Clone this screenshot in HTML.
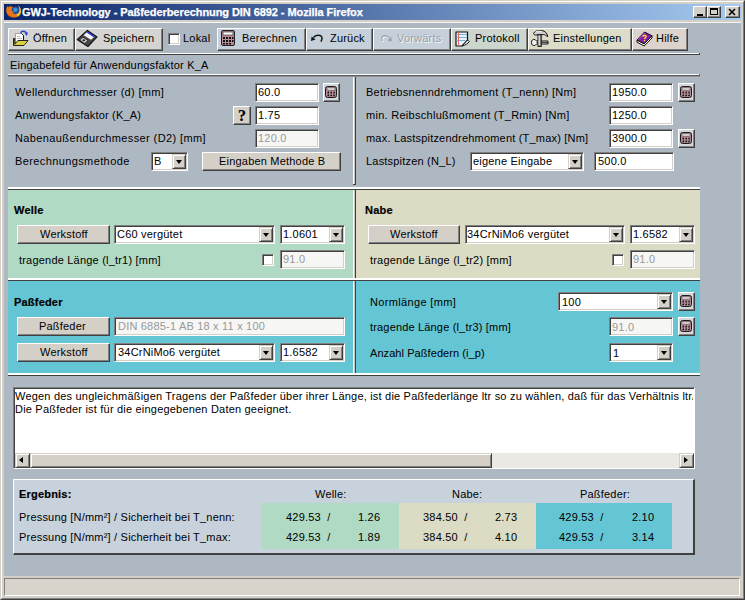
<!DOCTYPE html>
<html><head><meta charset="utf-8">
<style>
*{box-sizing:border-box;margin:0;padding:0}
html,body{width:745px;height:600px;overflow:hidden}
body{position:relative;background:#d4d0c8;font-family:"Liberation Sans",sans-serif;font-size:11px;color:#000}
.a{position:absolute}
.t{position:absolute;white-space:pre;line-height:13px;letter-spacing:0.2px}
.b{font-weight:bold;-webkit-text-stroke:0.2px currentColor}
.btn{position:absolute;background:#d4d0c8;border-top:1px solid #fff;border-left:1px solid #fff;border-right:1px solid #404040;border-bottom:1px solid #404040;box-shadow:inset -1px -1px 0 #808080}
.inp{position:absolute;background:#fff;border-top:1px solid #808080;border-left:1px solid #808080;border-right:1px solid #fff;border-bottom:1px solid #fff;box-shadow:inset 1px 1px 0 #404040,inset -1px -1px 0 #d4d0c8}
.dis{color:#999}
.sel .dd{position:absolute;right:1px;top:1px;width:14px;bottom:1px;background:#d4d0c8;border-top:1px solid #d4d0c8;border-left:1px solid #d4d0c8;border-right:1px solid #404040;border-bottom:1px solid #404040;box-shadow:inset 1px 1px 0 #fff,inset -1px -1px 0 #808080}
.dd:after{content:"";position:absolute;left:2.5px;top:5px;border-left:3.5px solid transparent;border-right:3.5px solid transparent;border-top:4px solid #000}
.cb{position:absolute;width:12px;height:12px;background:#fff;border-top:1px solid #808080;border-left:1px solid #808080;border-right:1px solid #fff;border-bottom:1px solid #fff;box-shadow:inset 1px 1px 0 #404040,inset -1px -1px 0 #d4d0c8}
.hl{position:absolute;height:1px}
.sb{position:absolute;background:#d4d0c8;border-top:1px solid #d4d0c8;border-left:1px solid #d4d0c8;border-right:1px solid #404040;border-bottom:1px solid #404040;box-shadow:inset 1px 1px 0 #fff,inset -1px -1px 0 #808080}
.calc{position:absolute;width:17px;height:19px;background:#d4d8dc;border-top:1px solid #fff;border-left:1px solid #fff;border-right:1px solid #404040;border-bottom:1px solid #404040;box-shadow:inset -1px -1px 0 #808080}
</style></head><body>

<!-- window frame -->
<div class="a" style="left:0;top:0;width:745px;height:600px;border-top:1px solid #d4d0c8;border-left:1px solid #d4d0c8;border-right:1px solid #404040;border-bottom:1px solid #404040"></div>
<div class="a" style="left:1px;top:1px;width:743px;height:598px;border-top:1px solid #fff;border-left:1px solid #fff;border-right:1px solid #808080;border-bottom:1px solid #808080"></div>
<!-- title bar -->
<div class="a" style="left:4px;top:4px;width:737px;height:16px;background:linear-gradient(to right,#0a246a,#a6caf0)"></div>
<svg class="a" style="left:5px;top:3px" width="16" height="16" viewBox="0 0 16 16">
<circle cx="10.6" cy="8" r="4.3" fill="#1f4c9c"/><circle cx="10.4" cy="6.8" r="2.2" fill="#3c90d8"/>
<path d="M2,3 L3.6,4.2 L5,2.4 L6,4 C7,3.6 7.6,3.8 8.2,4.2 C6.6,5.4 6.4,7 7.2,8.2 L9.2,9.2 L7.6,10 C9.2,11.4 12,11.6 13.6,10 C14.9,8.4 14.9,5.4 13,2.6 C15.6,4.4 16.2,7 15.8,9.6 C15.2,12.6 12.2,14.6 8.6,14.6 C4.6,14.6 1.2,11.6 1.2,7.6 C1.2,6 1.5,4.3 2,3Z" fill="#ea7412"/>
<path d="M13,2.6 C15.6,4.4 16.2,7 15.8,9.6 C15.4,11.6 14.2,13 12.6,13.8 L11.4,11.2 C12.5,11 13.1,10.6 13.6,10 C14.9,8.4 14.9,5.4 13,2.6Z" fill="#f6c82c"/>
<path d="M2.4,9.8 C3.2,12.4 5.6,14 8.4,14.2 C5.4,14.8 2.6,12.8 2.4,9.8Z" fill="#d84c08"/>
</svg>
<div class="t b" style="left:22px;top:6px;color:#fff;letter-spacing:-0.07px;-webkit-text-stroke:0.25px #fff">GWJ-Technology - Paßfederberechnung DIN 6892 - Mozilla Firefox</div>
<div class="btn" style="left:693px;top:6px;width:14px;height:12px"></div>
<div class="a" style="left:697px;top:14px;width:6px;height:2px;background:#000"></div>
<div class="btn" style="left:707px;top:6px;width:14px;height:12px"></div>
<div class="a" style="left:710px;top:8px;width:8px;height:7px;border:1px solid #000;border-top-width:2px"></div>
<div class="btn" style="left:725px;top:6px;width:15px;height:12px"></div>
<svg class="a" style="left:725px;top:6px" width="15" height="12" viewBox="0 0 15 12"><path d="M4,3 L10,9 M10,3 L4,9" stroke="#000" stroke-width="1.6"/></svg>

<!-- content bg -->
<div class="a" style="left:4px;top:22px;width:737px;height:554px;background:#aeb8c2;border-top:1px solid #f4f4f4"></div>

<!-- toolbar -->
<div class="btn" style="left:8px;top:28px;width:67px;height:23px;background:#d4d4d2"></div>
<div class="btn" style="left:75px;top:28px;width:88px;height:23px;background:#d4d4d2"></div>
<div class="cb" style="left:168px;top:33px;width:12px;height:12px"></div>
<div class="btn" style="left:217px;top:28px;width:89px;height:23px;background:#c6d0da"></div>
<div class="btn" style="left:306px;top:28px;width:67px;height:23px;background:#c6d0da"></div>
<div class="btn" style="left:373px;top:28px;width:78px;height:23px;background:#c6d0da"></div>
<div class="btn" style="left:451px;top:28px;width:77px;height:23px;background:#cdd6cc"></div>
<div class="btn" style="left:528px;top:28px;width:104px;height:23px;background:#dcdcc8"></div>
<div class="btn" style="left:632px;top:28px;width:56px;height:23px;background:#dcd4cc"></div>
<div class="t" style="left:33px;top:32px">Öffnen</div>
<div class="t" style="left:103px;top:32px">Speichern</div>
<div class="t" style="left:183px;top:32px">Lokal</div>
<div class="t" style="left:242px;top:32px">Berechnen</div>
<div class="t" style="left:330px;top:32px">Zurück</div>
<div class="t" style="left:397px;top:32px;color:#98a0a8;text-shadow:1px 1px 0 #f4f6f8">Vorwärts</div>
<div class="t" style="left:475px;top:32px">Protokoll</div>
<div class="t" style="left:553px;top:32px">Einstellungen</div>
<div class="t" style="left:656px;top:32px">Hilfe</div>

<!-- toolbar icons -->
<svg class="a" style="left:12px;top:30px" width="17" height="17" viewBox="0 0 17 17">
<path d="M3.5,3.5 h6 l2,2 v8 h-8z" fill="#fff" stroke="#777" stroke-width="0.6"/>
<path d="M9.5,3.5 l2,2 v8" fill="none" stroke="#111" stroke-width="1"/>
<path d="M5,6.5h3.5 M5,8.5h5 M5,10.5h5" stroke="#aaa" stroke-width="0.8"/>
<path d="M1.5,8.5 L1.5,15.5 L12,15.5 L16,10.5 L6,10.5 L2.8,14 L2.8,8.5z" fill="#b4ac18" stroke="#222" stroke-width="1"/>
<path d="M3,15 L6.2,11 L15,11 L12,15z" fill="#d8d040"/>
<path d="M8.5,3 C9.5,0.8 13,0.5 14.5,3.2" fill="none" stroke="#2a40d8" stroke-width="1.4"/><path d="M12.6,3.4 L16,2.6 L14.8,6z" fill="#2a40d8"/>
</svg>
<svg class="a" style="left:75px;top:28px" width="24" height="20" viewBox="0 0 24 20">
<path d="M2.2,11.6 L12.4,2.4 L22,8.9 L12.9,18.5 Z" fill="#4a4a4a" stroke="#111" stroke-width="1.2" stroke-linejoin="round"/>
<path d="M8.6,7.2 L12.4,3.8 L19.6,8.4 L16,11.8 Z" fill="#f4f4f4"/>
<path d="M11.6,4.4 L12.6,3.6 L19.8,8.2 L18.8,9.2 Z" fill="#2030e0"/>
<path d="M4.6,12 L8,9.2 L13,12.4 L9.6,15.6 Z" fill="#c8c8c8" stroke="#111" stroke-width="0.7"/>
<path d="M7.2,12.2 L8.6,11 L10.4,12.2 L9,13.4Z" fill="#222"/>
</svg>
<svg class="a" style="left:221px;top:30px" width="14" height="16" viewBox="0 0 14 16">
<rect x="0.5" y="0.5" width="13" height="15" rx="1.5" fill="#bc8c94" stroke="#222"/>
<rect x="2" y="2" width="10" height="3" fill="#fff" stroke="#222" stroke-width="0.6"/>
<g fill="#111"><rect x="2" y="7" width="2" height="2"/><rect x="5" y="7" width="2" height="2"/><rect x="8" y="7" width="2" height="2"/><rect x="11" y="7" width="1.5" height="2"/>
<rect x="2" y="10" width="2" height="2"/><rect x="5" y="10" width="2" height="2"/><rect x="8" y="10" width="2" height="2"/><rect x="11" y="10" width="1.5" height="2"/>
<rect x="2" y="13" width="2" height="1.5"/><rect x="5" y="13" width="2" height="1.5"/><rect x="8" y="13" width="2" height="1.5"/></g>
</svg>
<svg class="a" style="left:310px;top:33px" width="14" height="10" viewBox="0 0 14 10">
<path d="M3.5,4.5 C5.5,1.8 10.5,1.2 11.8,4 C12.4,5.4 11.8,7 11,8.6" fill="none" stroke="#111" stroke-width="1.5"/><path d="M1,8 L1.6,3.4 L5.6,6.6z" fill="#111"/>
</svg>
<svg class="a" style="left:379px;top:33px" width="14" height="10" viewBox="0 0 14 10">
<path d="M11.2,5.5 C9.5,2.5 4.5,1.8 3,4.2 C2.4,5.4 2.6,6.8 3.4,8" fill="none" stroke="#fff" stroke-width="1.3" transform="translate(0.8,0.8)"/>
<path d="M11.2,5.5 C9.5,2.5 4.5,1.8 3,4.2 C2.4,5.4 2.6,6.8 3.4,8" fill="none" stroke="#98a0a8" stroke-width="1.3"/><path d="M12.8,8.4 L12.4,4 L8.6,7.4z" fill="#98a0a8"/>
</svg>
<svg class="a" style="left:455px;top:31px" width="15" height="16" viewBox="0 0 15 16">
<path d="M1,1 h11.5 v8.2 l-5.5,5.8 h-6z" fill="#eef2fa" stroke="#111" stroke-width="1.2" stroke-linejoin="round"/>
<g stroke="#70b4e4" stroke-width="1"><path d="M1.5,3.5h10.5M1.5,6.5h10.5M1.5,9.5h9"/></g>
<path d="M3.5,1.5 v13" stroke="#e86868" stroke-width="1"/>
<path d="M7,14.8 L12.6,9 L14.2,10.6 C13,12.6 10,14.4 7,14.8z" fill="#f4f0f4" stroke="#111" stroke-width="1"/>
</svg>
<svg class="a" style="left:530px;top:29px" width="19" height="19" viewBox="0 0 19 19">
<path d="M1.5,13.5 C1.5,11 3,10 5,10.5 L6.5,12 L18,12 L18,15 L6.5,15 L5,16.5 C3,17 1.5,16 1.5,13.5Z" fill="#f0f0f0" stroke="#111" stroke-width="1"/>
<path d="M6.5,13.5 H18" stroke="#111" stroke-width="0.8"/>
<path d="M3.5,4.5 C4.5,2 8,1.2 12,1.6 C15,2 17,4 17.8,7.6 L16.2,6.8 C15.2,5.8 14,5.4 12,5.6 L5.5,6 C4.5,6 3.8,5.4 3.5,4.5Z" fill="#d0d0d0" stroke="#111" stroke-width="1"/>
<path d="M5.5,2.8 C7,2.2 10,2 12,2.4" stroke="#fff" stroke-width="1" fill="none"/>
<rect x="8" y="5.8" width="3.2" height="11.6" fill="#9a9a9a" stroke="#111" stroke-width="1"/>
<rect x="8.6" y="6.4" width="1" height="10" fill="#fff"/>
</svg>
<svg class="a" style="left:636px;top:30px" width="17" height="17" viewBox="0 0 17 17">
<path d="M1,10 L1,12.2 L8.2,16 L16,8 L16,5.8 L8.2,13.8z" fill="#fff" stroke="#111" stroke-width="1"/>
<path d="M1,10 L8.6,2 L16,5.8 L8.2,13.8z" fill="#8a1caa" stroke="#111" stroke-width="1"/>
<path d="M2.2,9.6 L8.6,3" stroke="#c070e0" stroke-width="0.9"/>
<path d="M7,6.8 C7,5 10.2,4.8 10,6.6 C9.8,7.8 8.6,7.8 8.6,9" fill="none" stroke="#f4e020" stroke-width="1.4"/>
<circle cx="8.5" cy="10.6" r="0.8" fill="#f4e020"/>
</svg>

<!-- separators -->
<div class="hl" style="left:8px;top:53px;width:691px;background:#fff"></div><div class="a" style="left:699px;top:53px;width:1px;height:1px;background:#404040"></div>
<div class="hl" style="left:8px;top:54px;width:692px;background:#404040"></div>
<div class="t" style="left:10px;top:59px">Eingabefeld für Anwendungsfaktor K_A</div>
<div class="hl" style="left:8px;top:74px;width:691px;background:#fff"></div><div class="a" style="left:699px;top:74px;width:1px;height:1px;background:#5a5a5a"></div>
<div class="hl" style="left:8px;top:75px;width:692px;background:#5a5a5a"></div>
<div class="hl" style="left:8px;top:76px;width:692px;background:#8c939b"></div>

<!-- input section -->
<div class="t" style="left:15px;top:86px;letter-spacing:0.31px">Wellendurchmesser (d) [mm]</div>
<div class="t" style="left:15px;top:109px;letter-spacing:0.17px">Anwendungsfaktor (K_A)</div>
<div class="t" style="left:15px;top:132px;letter-spacing:0.38px">Nabenaußendurchmesser (D2) [mm]</div>
<div class="t" style="left:15px;top:155px;letter-spacing:0.39px">Berechnungsmethode</div>

<div class="inp" style="left:255px;top:83px;width:64px;height:19px"></div><div class="t" style="left:258px;top:86px">60.0</div>
<div class="calc" style="left:323px;top:83px"><svg style="position:absolute;left:1px;top:2px" width="12" height="12" viewBox="0 0 12 12"><rect x="0.5" y="0.5" width="11" height="11" rx="2" fill="#b88a94" stroke="#1a1a1a"/><rect x="2" y="2" width="8" height="2" fill="#fff" stroke="#333" stroke-width="0.5"/><g fill="#111"><rect x="2.2" y="5.6" width="1.8" height="1.8"/><rect x="5.1" y="5.6" width="1.8" height="1.8"/><rect x="8" y="5.6" width="1.8" height="1.8"/><rect x="2.2" y="8.4" width="1.8" height="1.8"/><rect x="5.1" y="8.4" width="1.8" height="1.8"/><rect x="8" y="8.4" width="1.8" height="1.8"/></g><g fill="#fff" opacity="0.8"><rect x="2.2" y="5.6" width="0.8" height="0.8"/><rect x="5.1" y="5.6" width="0.8" height="0.8"/><rect x="8" y="5.6" width="0.8" height="0.8"/><rect x="2.2" y="8.4" width="0.8" height="0.8"/><rect x="5.1" y="8.4" width="0.8" height="0.8"/><rect x="8" y="8.4" width="0.8" height="0.8"/></g></svg></div>
<div class="btn" style="left:233px;top:106px;width:18px;height:19px"></div><div class="t b" style="left:238px;top:109px;font-family:'Liberation Serif';font-size:16px">?</div>
<div class="inp" style="left:255px;top:106px;width:64px;height:19px"></div><div class="t" style="left:258px;top:109px">1.75</div>
<div class="inp" style="left:255px;top:129px;width:64px;height:19px;background:#f6f6f5"></div><div class="t dis" style="left:258px;top:132px">120.0</div>
<div class="inp sel" style="left:151px;top:152px;width:37px;height:19px"><div class="dd"></div></div><div class="t" style="left:154px;top:155px">B</div>
<div class="btn" style="left:202px;top:152px;width:139px;height:19px"></div><div class="t" style="left:219px;top:155px">Eingaben Methode B</div>

<!-- vertical sep -->
<div class="a" style="left:353px;top:77px;width:1px;height:107px;background:#fff"></div>
<div class="a" style="left:354px;top:77px;width:1px;height:107px;background:#c8c4bc"></div>
<div class="a" style="left:355px;top:77px;width:1px;height:108px;background:#404040"></div>
<div class="a" style="left:353px;top:184px;width:3px;height:1px;background:#404040"></div>

<div class="t" style="left:366px;top:86px;letter-spacing:0.27px">Betriebsnenndrehmoment (T_nenn) [Nm]</div>
<div class="t" style="left:366px;top:109px;letter-spacing:0.28px">min. Reibschlußmoment (T_Rmin) [Nm]</div>
<div class="t" style="left:366px;top:132px">max. Lastspitzendrehmoment (T_max) [Nm]</div>
<div class="t" style="left:366px;top:155px">Lastspitzen (N_L)</div>
<div class="inp" style="left:609px;top:83px;width:64px;height:19px"></div><div class="t" style="left:612px;top:86px">1950.0</div>
<div class="calc" style="left:678px;top:83px"><svg style="position:absolute;left:1px;top:2px" width="12" height="12" viewBox="0 0 12 12"><rect x="0.5" y="0.5" width="11" height="11" rx="2" fill="#b88a94" stroke="#1a1a1a"/><rect x="2" y="2" width="8" height="2" fill="#fff" stroke="#333" stroke-width="0.5"/><g fill="#111"><rect x="2.2" y="5.6" width="1.8" height="1.8"/><rect x="5.1" y="5.6" width="1.8" height="1.8"/><rect x="8" y="5.6" width="1.8" height="1.8"/><rect x="2.2" y="8.4" width="1.8" height="1.8"/><rect x="5.1" y="8.4" width="1.8" height="1.8"/><rect x="8" y="8.4" width="1.8" height="1.8"/></g><g fill="#fff" opacity="0.8"><rect x="2.2" y="5.6" width="0.8" height="0.8"/><rect x="5.1" y="5.6" width="0.8" height="0.8"/><rect x="8" y="5.6" width="0.8" height="0.8"/><rect x="2.2" y="8.4" width="0.8" height="0.8"/><rect x="5.1" y="8.4" width="0.8" height="0.8"/><rect x="8" y="8.4" width="0.8" height="0.8"/></g></svg></div>
<div class="inp" style="left:609px;top:106px;width:64px;height:19px"></div><div class="t" style="left:612px;top:109px">1250.0</div>
<div class="inp" style="left:609px;top:129px;width:64px;height:19px"></div><div class="t" style="left:612px;top:132px">3900.0</div>
<div class="calc" style="left:678px;top:129px"><svg style="position:absolute;left:1px;top:2px" width="12" height="12" viewBox="0 0 12 12"><rect x="0.5" y="0.5" width="11" height="11" rx="2" fill="#b88a94" stroke="#1a1a1a"/><rect x="2" y="2" width="8" height="2" fill="#fff" stroke="#333" stroke-width="0.5"/><g fill="#111"><rect x="2.2" y="5.6" width="1.8" height="1.8"/><rect x="5.1" y="5.6" width="1.8" height="1.8"/><rect x="8" y="5.6" width="1.8" height="1.8"/><rect x="2.2" y="8.4" width="1.8" height="1.8"/><rect x="5.1" y="8.4" width="1.8" height="1.8"/><rect x="8" y="8.4" width="1.8" height="1.8"/></g><g fill="#fff" opacity="0.8"><rect x="2.2" y="5.6" width="0.8" height="0.8"/><rect x="5.1" y="5.6" width="0.8" height="0.8"/><rect x="8" y="5.6" width="0.8" height="0.8"/><rect x="2.2" y="8.4" width="0.8" height="0.8"/><rect x="5.1" y="8.4" width="0.8" height="0.8"/><rect x="8" y="8.4" width="0.8" height="0.8"/></g></svg></div>
<div class="inp sel" style="left:470px;top:152px;width:114px;height:19px"><div class="dd"></div></div><div class="t" style="left:473px;top:155px">eigene Eingabe</div>
<div class="inp" style="left:594px;top:152px;width:80px;height:19px"></div><div class="t" style="left:598px;top:155px">500.0</div>

<!-- panels -->
<div class="hl" style="left:8px;top:187px;width:692px;height:2px;background:#fff"></div>
<div class="hl" style="left:8px;top:189px;width:692px;background:#404040"></div>
<div class="a" style="left:8px;top:190px;width:345px;height:88px;background:#b0dac4"></div>
<div class="a" style="left:356px;top:190px;width:344px;height:88px;background:#dcdbc3"></div>
<div class="a" style="left:353px;top:190px;width:1px;height:88px;background:#fff"></div><div class="a" style="left:354px;top:190px;width:1px;height:88px;background:#c8c4bc"></div>
<div class="a" style="left:355px;top:190px;width:1px;height:88px;background:#404040"></div>
<div class="hl" style="left:8px;top:278px;width:692px;height:2px;background:#fff"></div>
<div class="hl" style="left:8px;top:280px;width:692px;background:#404040"></div>
<div class="a" style="left:8px;top:281px;width:345px;height:92px;background:#64c6d4"></div>
<div class="a" style="left:356px;top:281px;width:344px;height:92px;background:#64c6d4"></div>
<div class="a" style="left:353px;top:281px;width:1px;height:92px;background:#fff"></div><div class="a" style="left:354px;top:281px;width:1px;height:92px;background:#c8c4bc"></div>
<div class="a" style="left:355px;top:281px;width:1px;height:92px;background:#404040"></div>
<div class="hl" style="left:8px;top:373px;width:692px;height:2px;background:#fff"></div>
<div class="hl" style="left:8px;top:375px;width:692px;background:#404040"></div>

<!-- Welle -->
<div class="t b" style="left:14px;top:204px">Welle</div>
<div class="btn" style="left:17px;top:225px;width:93px;height:19px"></div><div class="t" style="left:40px;top:228px">Werkstoff</div>
<div class="inp sel" style="left:114px;top:225px;width:161px;height:19px"><div class="dd"></div></div><div class="t" style="left:117px;top:228px">C60 vergütet</div>
<div class="inp sel" style="left:280px;top:225px;width:65px;height:19px"><div class="dd"></div></div><div class="t" style="left:283px;top:228px">1.0601</div>
<div class="t" style="left:19px;top:254px">tragende Länge (l_tr1) [mm]</div>
<div class="cb" style="left:262px;top:254px"></div>
<div class="inp" style="left:280px;top:250px;width:65px;height:19px;background:#f6f6f5"></div><div class="t dis" style="left:283px;top:253px">91.0</div>

<!-- Nabe -->
<div class="t b" style="left:365px;top:204px">Nabe</div>
<div class="btn" style="left:368px;top:225px;width:92px;height:19px"></div><div class="t" style="left:390px;top:228px">Werkstoff</div>
<div class="inp sel" style="left:465px;top:225px;width:160px;height:19px"><div class="dd"></div></div><div class="t" style="left:467px;top:228px">34CrNiMo6 vergütet</div>
<div class="inp sel" style="left:630px;top:225px;width:65px;height:19px"><div class="dd"></div></div><div class="t" style="left:633px;top:228px">1.6582</div>
<div class="t" style="left:370px;top:254px">tragende Länge (l_tr2) [mm]</div>
<div class="cb" style="left:612px;top:254px"></div>
<div class="inp" style="left:630px;top:250px;width:65px;height:19px;background:#f6f6f5"></div><div class="t dis" style="left:633px;top:253px">91.0</div>

<!-- Paßfeder -->
<div class="t b" style="left:14px;top:296px">Paßfeder</div>
<div class="btn" style="left:17px;top:317px;width:93px;height:19px"></div><div class="t" style="left:39px;top:320px">Paßfeder</div>
<div class="inp" style="left:114px;top:317px;width:231px;height:19px;background:#f6f6f5"></div><div class="t dis" style="left:118px;top:320px">DIN 6885-1 AB 18 x 11 x 100</div>
<div class="btn" style="left:17px;top:343px;width:93px;height:19px"></div><div class="t" style="left:40px;top:346px">Werkstoff</div>
<div class="inp sel" style="left:114px;top:343px;width:161px;height:19px"><div class="dd"></div></div><div class="t" style="left:118px;top:346px">34CrNiMo6 vergütet</div>
<div class="inp sel" style="left:280px;top:343px;width:65px;height:19px"><div class="dd"></div></div><div class="t" style="left:283px;top:346px">1.6582</div>

<div class="t" style="left:370px;top:296px;letter-spacing:0.34px">Normlänge [mm]</div>
<div class="t" style="left:370px;top:321px;letter-spacing:0.17px">tragende Länge (l_tr3) [mm]</div>
<div class="t" style="left:370px;top:347px;letter-spacing:0.07px">Anzahl Paßfedern (i_p)</div>
<div class="inp sel" style="left:558px;top:292px;width:115px;height:19px"><div class="dd"></div></div><div class="t" style="left:562px;top:296px">100</div>
<div class="calc" style="left:678px;top:292px"><svg style="position:absolute;left:1px;top:2px" width="12" height="12" viewBox="0 0 12 12"><rect x="0.5" y="0.5" width="11" height="11" rx="2" fill="#b88a94" stroke="#1a1a1a"/><rect x="2" y="2" width="8" height="2" fill="#fff" stroke="#333" stroke-width="0.5"/><g fill="#111"><rect x="2.2" y="5.6" width="1.8" height="1.8"/><rect x="5.1" y="5.6" width="1.8" height="1.8"/><rect x="8" y="5.6" width="1.8" height="1.8"/><rect x="2.2" y="8.4" width="1.8" height="1.8"/><rect x="5.1" y="8.4" width="1.8" height="1.8"/><rect x="8" y="8.4" width="1.8" height="1.8"/></g><g fill="#fff" opacity="0.8"><rect x="2.2" y="5.6" width="0.8" height="0.8"/><rect x="5.1" y="5.6" width="0.8" height="0.8"/><rect x="8" y="5.6" width="0.8" height="0.8"/><rect x="2.2" y="8.4" width="0.8" height="0.8"/><rect x="5.1" y="8.4" width="0.8" height="0.8"/><rect x="8" y="8.4" width="0.8" height="0.8"/></g></svg></div>
<div class="inp" style="left:609px;top:317px;width:64px;height:19px;background:#f6f6f5"></div><div class="t dis" style="left:612px;top:321px">91.0</div>
<div class="calc" style="left:678px;top:317px"><svg style="position:absolute;left:1px;top:2px" width="12" height="12" viewBox="0 0 12 12"><rect x="0.5" y="0.5" width="11" height="11" rx="2" fill="#b88a94" stroke="#1a1a1a"/><rect x="2" y="2" width="8" height="2" fill="#fff" stroke="#333" stroke-width="0.5"/><g fill="#111"><rect x="2.2" y="5.6" width="1.8" height="1.8"/><rect x="5.1" y="5.6" width="1.8" height="1.8"/><rect x="8" y="5.6" width="1.8" height="1.8"/><rect x="2.2" y="8.4" width="1.8" height="1.8"/><rect x="5.1" y="8.4" width="1.8" height="1.8"/><rect x="8" y="8.4" width="1.8" height="1.8"/></g><g fill="#fff" opacity="0.8"><rect x="2.2" y="5.6" width="0.8" height="0.8"/><rect x="5.1" y="5.6" width="0.8" height="0.8"/><rect x="8" y="5.6" width="0.8" height="0.8"/><rect x="2.2" y="8.4" width="0.8" height="0.8"/><rect x="5.1" y="8.4" width="0.8" height="0.8"/><rect x="8" y="8.4" width="0.8" height="0.8"/></g></svg></div>
<div class="inp sel" style="left:609px;top:343px;width:64px;height:19px"><div class="dd"></div></div><div class="t" style="left:613px;top:347px">1</div>

<!-- textarea -->
<div class="a" style="left:13px;top:387px;width:682px;height:82px;background:#fff;border-top:1px solid #808080;border-left:1px solid #808080;border-right:1px solid #fff;border-bottom:1px solid #fff;box-shadow:inset 1px 1px 0 #404040"></div>
<div class="t" style="left:15px;top:390px;width:678px;overflow:hidden;letter-spacing:0.2px">Wegen des ungleichmäßigen Tragens der Paßfeder über ihrer Länge, ist die Paßfederlänge ltr so zu wählen, daß für das Verhältnis ltr/d gilt</div>
<div class="t" style="left:15px;top:403px;letter-spacing:0.2px">Die Paßfeder ist für die eingegebenen Daten geeignet.</div>
<div class="a" style="left:15px;top:453px;width:679px;height:15px;background:#ebe9e4"></div>
<div class="sb" style="left:15px;top:453px;width:15px;height:15px"></div>
<div class="a" style="left:19px;top:457px;border-top:3.5px solid transparent;border-bottom:3.5px solid transparent;border-right:4px solid #000"></div>
<div class="sb" style="left:30px;top:453px;width:462px;height:15px"></div>
<div class="sb" style="left:679px;top:453px;width:15px;height:15px"></div>
<div class="a" style="left:684px;top:457px;border-top:3.5px solid transparent;border-bottom:3.5px solid transparent;border-left:4px solid #000"></div>

<!-- results -->
<div class="a" style="left:13px;top:479px;width:682px;height:76px;background:#c8d2dc;border-top:1px solid #fff;border-left:1px solid #fff;border-right:2px solid #404040;border-bottom:2px solid #404040"></div>
<div class="t b" style="left:19px;top:488px">Ergebnis:</div>
<div class="t" style="left:315px;top:488px">Welle:</div>
<div class="t" style="left:452px;top:488px">Nabe:</div>
<div class="t" style="left:580px;top:488px">Paßfeder:</div>
<div class="t" style="left:19px;top:511px">Pressung [N/mm²] / Sicherheit bei T_nenn:</div>
<div class="t" style="left:19px;top:531px">Pressung [N/mm²] / Sicherheit bei T_max:</div>
<div class="a" style="left:262px;top:503px;width:137px;height:46px;background:#b0dac4"></div>
<div class="a" style="left:399px;top:503px;width:137px;height:46px;background:#dcdbc3"></div>
<div class="a" style="left:536px;top:503px;width:136px;height:46px;background:#64c6d4"></div>
<div class="t" style="left:286px;top:511px">429.53  /</div><div class="t" style="left:358px;top:511px">1.26</div>
<div class="t" style="left:286px;top:531px">429.53  /</div><div class="t" style="left:358px;top:531px">1.89</div>
<div class="t" style="left:423px;top:511px">384.50  /</div><div class="t" style="left:495px;top:511px">2.73</div>
<div class="t" style="left:423px;top:531px">384.50  /</div><div class="t" style="left:495px;top:531px">4.10</div>
<div class="t" style="left:559px;top:511px">429.53  /</div><div class="t" style="left:632px;top:511px">2.10</div>
<div class="t" style="left:559px;top:531px">429.53  /</div><div class="t" style="left:632px;top:531px">3.14</div>


<!-- status bar -->
<div class="a" style="left:4px;top:578px;width:736px;height:18px;background:#d8d4cc;border-top:1px solid #808080;border-left:1px solid #808080;border-right:1px solid #fff;border-bottom:1px solid #fff"></div>
</body></html>
